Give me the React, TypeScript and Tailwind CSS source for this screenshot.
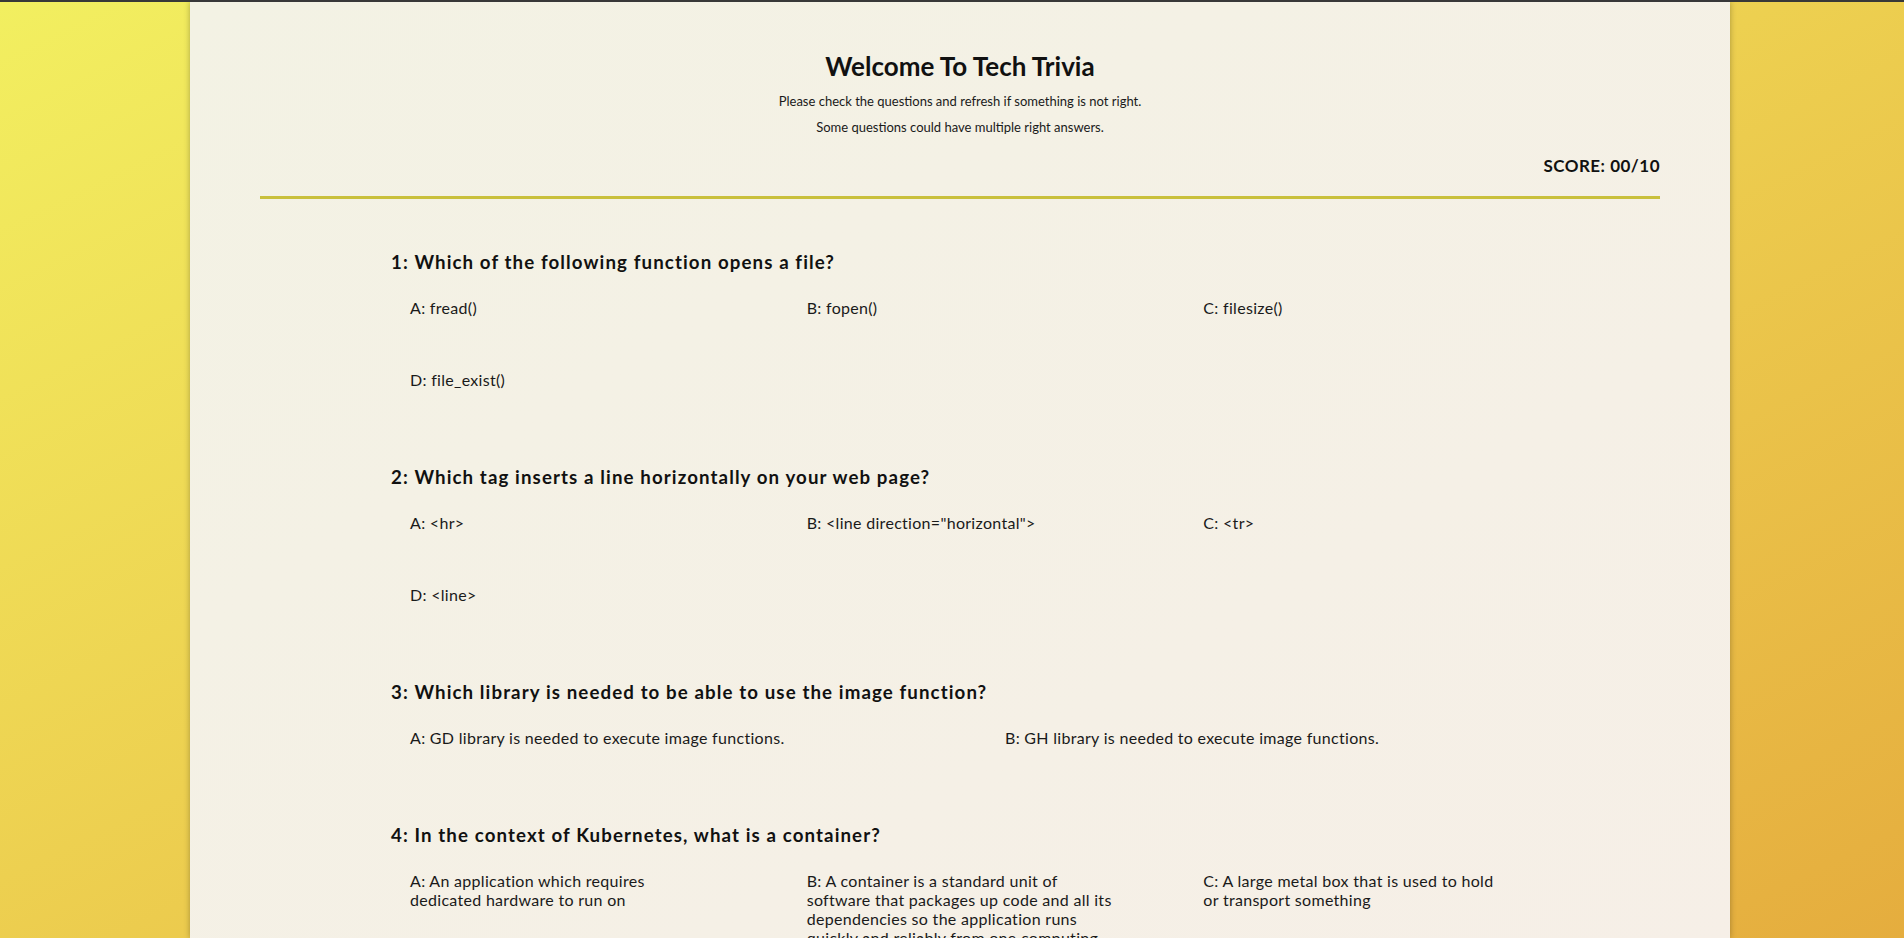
type Question = {
  text: string;
  options: string[];
};

const questions: Question[] = [
  {
    text: "Which of the following function opens a file?",
    options: ["fread()", "fopen()", "filesize()", "file_exist()"],
  },
  {
    text: "Which tag inserts a line horizontally on your web page?",
    options: ["<hr>", '<line direction="horizontal">', "<tr>", "<line>"],
  },
  {
    text: "Which library is needed to be able to use the image function?",
    options: [
      "GD library is needed to execute image functions.",
      "GH library is needed to execute image functions.",
    ],
  },
  {
    text: "In the context of Kubernetes, what is a container?",
    options: [
      "An application which requires dedicated hardware to run on",
      "A container is a standard unit of software that packages up code and all its dependencies so the application runs quickly and reliably from one computing environment to another",
      "A large metal box that is used to hold or transport something",
      "A virtual machine that runs its own full operating system",
    ],
  },
  {
    text: "Which HTTP status code means the resource was not found?",
    options: ["200", "301", "404", "500"],
  },
];

const letters = ["A", "B", "C", "D", "E"];

function QuestionBlock({ index, question }: { index: number; question: Question }) {
  const twoCols = question.options.length === 2;

  return (
    <div className="mb-[24px]">
      <h3 className="mb-[25px] text-[18.7px] leading-[22px] font-bold tracking-[1.1px] text-[#111]">
        {index + 1}: {question.text}
      </h3>
      <div className={`ml-[19px] grid w-[1190px] ${twoCols ? "grid-cols-2" : "grid-cols-3"}`}>
        {question.options.map((option, i) => (
          <div key={i} className="pb-[53px]">
            <div
              className={`${twoCols ? "max-w-[460px]" : "max-w-[308px]"} text-[16px] leading-[19px] tracking-[0.3px] text-[#1a1a1a]`}
            >
              {letters[i]}: {option}
            </div>
          </div>
        ))}
      </div>
    </div>
  );
}

export default function App() {
  return (
    <div
      className="h-screen overflow-hidden border-t-2 border-[#383838] bg-linear-to-br from-[#f2ef60] to-[#e5ad3e]"
      style={{ fontFamily: "Lato, 'Open Sans', sans-serif" }}
    >
      <div className="ml-[190px] h-full w-[1540px] bg-linear-to-br from-[#f3f2e4] to-[#f6efe7] px-[70px] pt-[48px] shadow-[0_0_6px_rgba(0,0,0,0.3)]">
        <header className="text-center">
          <h1 className="text-[26px] leading-[32px] font-bold text-[#111]">Welcome To Tech Trivia</h1>
          <p className="mt-[11px] text-[13px] leading-[16px] text-[#1a1a1a]">
            Please check the questions and refresh if something is not right.
          </p>
          <p className="mt-[10px] text-[13px] leading-[16px] text-[#1a1a1a]">
            Some questions could have multiple right answers.
          </p>
        </header>
        <div className="mt-[21px] text-right text-[17px] leading-[20px] font-bold tracking-[0.5px] text-[#111]">
          SCORE: 00/10
        </div>
        <div className="mt-[20px] h-[3px] bg-[#c9c03c]" />

        <div className="pt-[52px] pl-[131px]">
          {questions.map((q, i) => (
            <QuestionBlock key={i} index={i} question={q} />
          ))}
        </div>
      </div>
    </div>
  );
}
